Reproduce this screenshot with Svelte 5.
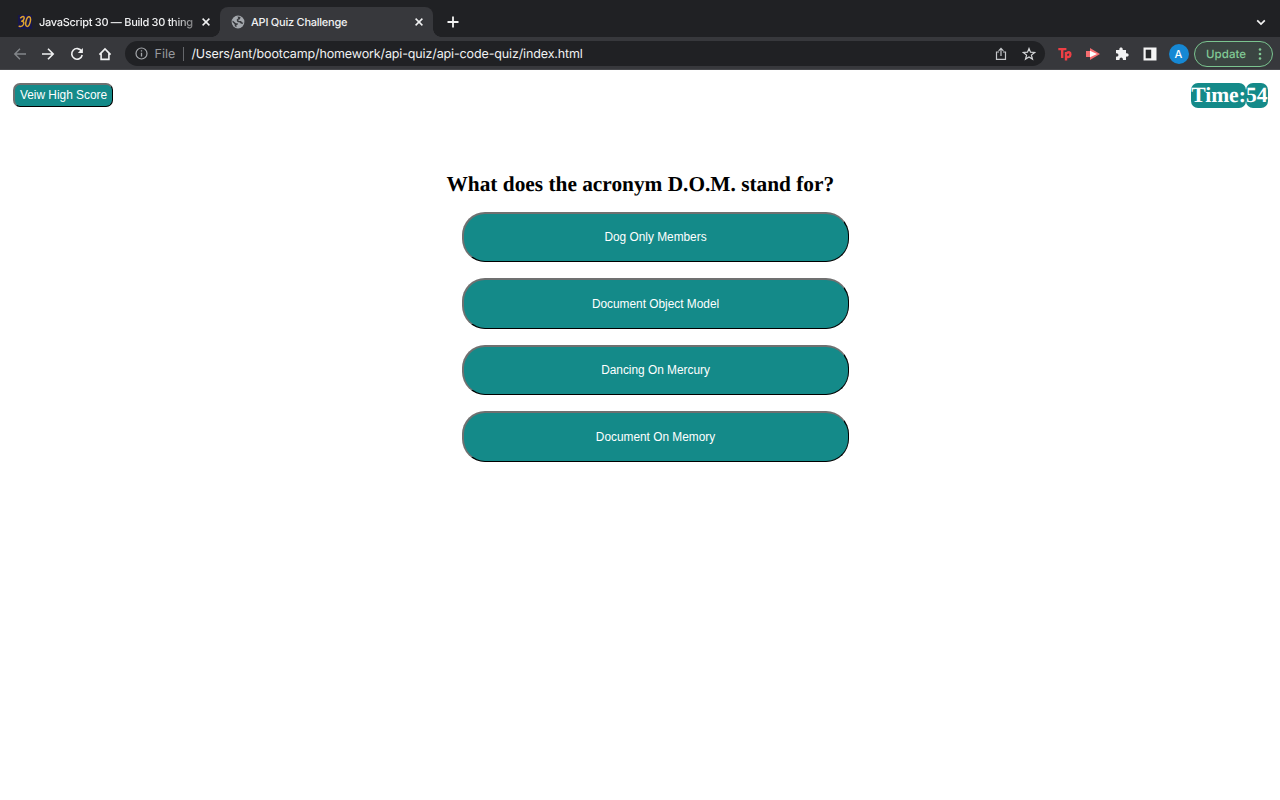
<script>
  const answers = ['Dog Only Members', 'Document Object Model', 'Dancing On Mercury', 'Document On Memory'];
  let seconds = $state(54);
</script>

<div class="window">
  <div class="tabs">
    <div class="tab first">
      <svg class="fav" width="14" height="14" viewBox="0 0 14 14"><rect width="14" height="14" fill="#17164b"/><g fill="none" stroke="#dea32e" stroke-width="1.5" stroke-linecap="round" stroke-linejoin="round"><path d="M2.6 2.8Q6.2 .2 6.2 3.2Q5.9 5.6 3.8 6.2Q6.6 6.5 5.5 9.5Q4.2 12 1.2 11.3"/><ellipse cx="10.1" cy="6.6" rx="2.1" ry="4.9" transform="rotate(14 10.1 6.6)"/></g></svg>
      <span class="title fade">JavaScript 30 — Build 30 thing</span>
      <svg class="close" width="10" height="10" viewBox="0 0 10 10"><path d="M1.6 1.6L8.4 8.4M8.4 1.6L1.6 8.4" stroke="#f0f1f2" stroke-width="1.5"/></svg>
    </div>
    <div class="tab active">
      <svg class="globe" width="14" height="14" viewBox="0 0 14 14"><circle cx="7" cy="7" r="6.4" fill="#a4a8ad"/><path d="M1.7 5.6L5 8.2H6.8V9.6L5.2 10.5L5.7 12.3L3.8 11.2L3.6 9.2L1.4 7Z" fill="#383a3e"/><path d="M6.5 1.6L9.5 2.1L9 4.2L7.3 4.8L7.6 6H10L11.2 7.5L12.3 7.6L11.6 9L9.7 8.6L8.9 7.5L6.4 7L5.6 4.8L7.2 3.3Z" fill="#383a3e"/></svg>
      <span class="title">API Quiz Challenge</span>
      <svg class="close" width="10" height="10" viewBox="0 0 10 10"><path d="M1.6 1.6L8.4 8.4M8.4 1.6L1.6 8.4" stroke="#f0f1f2" stroke-width="1.5"/></svg>
    </div>
    <svg class="plus" width="12" height="12" viewBox="0 0 12 12"><path d="M6 .5V11.5M.5 6H11.5" stroke="#f2f2f2" stroke-width="1.8"/></svg>
    <svg class="chevron" width="10" height="7" viewBox="0 0 10 7"><path d="M1.2 1.3L5 5L8.8 1.3" fill="none" stroke="#f2f2f2" stroke-width="1.7"/></svg>
  </div>

  <div class="toolbar">
    <svg class="nav" width="14" height="14" viewBox="0 0 14 14"><path d="M13 7H2M7 1.8L1.8 7L7 12.2" fill="none" stroke="#84878b" stroke-width="1.4"/></svg>
    <svg class="nav" width="14" height="14" viewBox="0 0 14 14"><path d="M1 7H12M7 1.8L12.2 7L7 12.2" fill="none" stroke="#f0f1f2" stroke-width="1.6"/></svg>
    <svg class="nav" width="14" height="14" viewBox="0 0 14 14"><path d="M11.6 4.2A5.3 5.3 0 1 0 12.2 8" fill="none" stroke="#f0f1f2" stroke-width="1.6"/><path d="M12.9 .9V6H7.8Z" fill="#f0f1f2"/></svg>
    <svg class="nav" width="14" height="14" viewBox="0 0 14 14"><path d="M1.4 7.6L7 2L12.6 7.6M3.1 6.2V12.4H10.9V6.2" fill="none" stroke="#f0f1f2" stroke-width="1.6"/></svg>
    <div class="address">
      <svg width="13" height="13" viewBox="0 0 13 13"><circle cx="6.5" cy="6.5" r="5.5" fill="none" stroke="#a5a8ac" stroke-width="1.2"/><path d="M6.5 5.8V9.5M6.5 3.2V4.6" stroke="#a5a8ac" stroke-width="1.3"/></svg>
      <span class="file">File</span><i></i><span class="url">/Users/ant/bootcamp/homework/api-quiz/api-code-quiz/index.html</span>
      <svg class="share" width="12" height="14" viewBox="0 0 12 14"><path d="M4 5H1.5V12.4H10.5V5H8M6 9V1.5M3.6 3.8L6 1.4L8.4 3.8" fill="none" stroke="#c5c7ca" stroke-width="1.2"/></svg>
      <svg class="star" width="14" height="14" viewBox="0 0 14 14"><path d="M7 1.5L8.5 5.2L12.6 5.5L9.4 8.1L10.5 12.1L7 9.9L3.5 12.1L4.6 8.1L1.4 5.5L5.5 5.2Z" fill="none" stroke="#d4d6d8" stroke-width="1.2"/></svg>
    </div>
    <svg class="tp" width="14" height="14" viewBox="0 0 14 14"><path d="M.3 2.1H8.4M4.2 2V11M8 5V13.4M8.3 6.2Q12.5 3.8 12.4 7.4Q12.2 11 8.3 9.5" fill="none" stroke="#ee3f45" stroke-width="2.4"/></svg>
    <svg class="play" width="16" height="14" viewBox="0 0 16 14"><path d="M1 4H5V1L15 7L5 13V10H1Z" fill="#f46d70"/><path d="M5 3.8V10.2L12 7Z" fill="#fff"/></svg>
    <svg class="puzzle" width="14" height="14" viewBox="0 0 14 14"><path d="M1 3H4.4C3.6-.2 8.4-.2 7.7 3H11V6.3C14.5 5.5 14.5 10.3 11 9.6V13H7.9C8.4 9.6 4.1 9.6 4.5 13H1V9.6C4.2 10 4.2 5.8 1 6.2Z" fill="#f2f2f3"/></svg>
    <svg class="panel" width="14" height="14" viewBox="0 0 14 14"><path d="M.5 .5H13.5V13.5H.5Z" fill="#f5f5f5"/><path d="M2.7 2.7H8.2V11.3H2.7Z" fill="#292b2d"/></svg>
    <b class="avatar">A</b>
    <div class="update"><span>Update</span><svg width="4" height="12" viewBox="0 0 4 12"><g fill="#81c995"><circle cx="2" cy="1.5" r="1.3"/><circle cx="2" cy="6" r="1.3"/><circle cx="2" cy="10.5" r="1.3"/></g></svg></div>
  </div>

  <main>
    <header>
      <button class="score">Veiw High Score</button>
      <div class="timer"><span>Time:</span><span>{seconds}</span></div>
    </header>
    <section>
      <h1>What does the acronym D.O.M. stand for?</h1>
      <div class="answers">
        {#each answers as answer}
          <button>{answer}</button>
        {/each}
      </div>
    </section>
  </main>
</div>

<style>
  :global(body) { margin: 0; background: #fff; overflow: hidden; }
  * { box-sizing: border-box; }
  svg { display: block; flex: none; }
  .window { width: 1280px; height: 800px; background: #fff; font-family: Inter, sans-serif; text-rendering: geometricPrecision; }
  .tabs { height: 37px; background: #202124; display: flex; padding-top: 7px; }
  .tab { display: flex; align-items: center; height: 30px; color: #f0f1f2; font-size: 11px; font-weight: 500; }
  .first { width: 220px; padding-left: 18px; }
  .title { white-space: nowrap; letter-spacing: -.24px; }
  .first .title { width: 156px; margin-left: 7px; letter-spacing: -.29px; }
  .fade { mask-image: linear-gradient(to right, #000 132px, #0006 156px); }
  .first .close { margin-left: 6px; }
  .active { position: relative; width: 213px; padding: 0 9px 0 11px; background: #37383c; border-radius: 8px 8px 0 0; }
  .active::before, .active::after { content: ''; position: absolute; bottom: 0; width: 8px; height: 8px; }
  .active::before { left: -8px; background: radial-gradient(circle at 0 0, transparent 7.5px, #37383c 8px); }
  .active::after { right: -8px; background: radial-gradient(circle at 100% 0, transparent 7.5px, #37383c 8px); }
  .active .title { margin-left: 6px; }
  .active .close { margin-left: auto; }
  .plus { margin: 9px 0 0 13.5px; }
  .chevron { margin: 12px 14.5px 0 auto; }
  .toolbar { height: 33px; background: #37383c; display: flex; align-items: center; border-bottom: 1px solid #48494d; padding: 1px 0 0 12.5px; }
  .nav { margin-right: 14.5px; }
  .address { width: 920.5px; height: 25px; margin-left: -2px; padding: 0 9px 0 10px; border-radius: 13px; background: #202124; display: flex; align-items: center; font-size: 12.5px; }
  .file, .url { padding-top: 1px; }
  .file { color: #96999d; margin-left: 7px; width: 21px; white-space: nowrap; }
  .address i { width: 1px; height: 14px; background: #65676b; margin: 0 8px 0 7px; }
  .url { color: #f0f1f2; white-space: nowrap; letter-spacing: -.13px; }
  .share { margin-left: auto; }
  .star { margin-left: 15.5px; }
  .tp { margin-left: 13px; }
  .play { margin-left: 13px; }
  .puzzle { margin-left: 14px; }
  .panel { margin-left: 14px; }
  .avatar { width: 20px; height: 20px; margin-left: 11.5px; border-radius: 50%; background: #1688d4; color: #fff; font: 500 11px/20px Inter, sans-serif; text-align: center; }
  .update { width: 79px; height: 26px; margin-left: 5.5px; border: 1.5px solid #7bc490; border-radius: 13px; background: #3b4542; display: flex; align-items: center; justify-content: space-between; padding: 0 10px 0 11px; color: #81c995; font-size: 11.5px; font-weight: 500; letter-spacing: .05px; }
  header { display: flex; justify-content: space-between; padding: 13px 12.5px 0 13px; height: 102px; }
  button { font-family: "Liberation Sans", sans-serif; color: #fff; background: #148a89; border: solid; border-width: 2px 1px 1px 2px; border-color: #6f7070 #000 #000 #6f7070; padding: 0; white-space: nowrap; }
  .score { width: 100px; height: 24px; border-radius: 7px; font-size: 11.9px; padding: 0 0 1px; }
  .timer { height: 25px; display: flex; font: bold 21.6px/25px "Liberation Serif", serif; color: #fff; }
  .timer span { background: #148a89; border-radius: 7px; height: 24.5px; }
  section { width: 387px; margin: 0 auto; }
  h1 { margin: 0; height: 40px; font: bold 21.33px/25px "Liberation Serif", serif; color: #000; white-space: nowrap; }
  .answers { width: 387px; margin-left: 15px; display: grid; gap: 16.1px; }
  .answers button { height: 50.4px; border-radius: 23px; font-size: 11.87px; padding-bottom: 1px; }
</style>
